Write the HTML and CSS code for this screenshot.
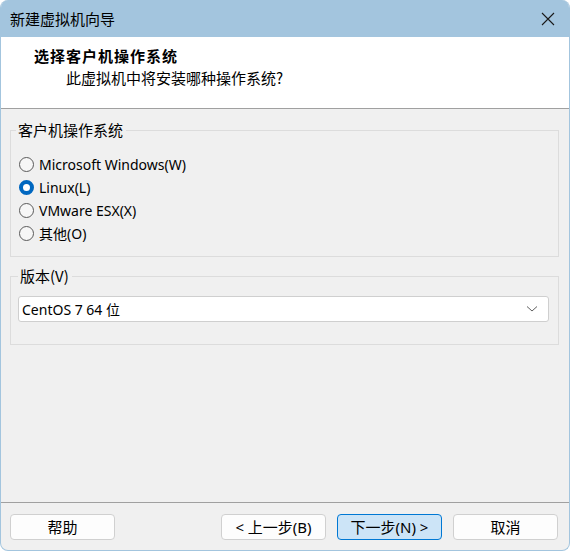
FILE: index.html
```html
<!DOCTYPE html>
<html lang="zh-CN">
<head>
<meta charset="utf-8">
<title>新建虚拟机向导</title>
<link rel="stylesheet" href="styles.css">
</head>
<body>
<div class="window">
  <div class="titlebar">
    <span class="title">新建虚拟机向导</span>
    <span class="close">
      <svg width="14" height="14" viewBox="0 0 14 14"><path d="M1 1 L13 13 M13 1 L1 13" stroke="#1a1a1a" stroke-width="1.1" fill="none"/></svg>
    </span>
  </div>
  <div class="header">
    <div class="h-title">选择客户机操作系统</div>
    <div class="h-sub">此虚拟机中将安装哪种操作系统?</div>
  </div>
  <div class="content">
    <fieldset class="group group-os">
      <legend>客户机操作系统</legend>
      <div class="radio-row"><span class="radio"></span><span class="lbl">Microsoft Windows(W)</span></div>
      <div class="radio-row"><span class="radio checked"></span><span class="lbl">Linux(L)</span></div>
      <div class="radio-row"><span class="radio"></span><span class="lbl">VMware ESX(X)</span></div>
      <div class="radio-row"><span class="radio"></span><span class="lbl">其他(O)</span></div>
    </fieldset>
    <fieldset class="group group-ver">
      <legend>版本(V)</legend>
      <div class="select">
        <span class="lbl">CentOS 7 64 位</span>
        <svg width="12" height="8" viewBox="0 0 12 8"><path d="M1 1.5 L6 6 L11 1.5" stroke="#606060" stroke-width="1" fill="none"/></svg>
      </div>
    </fieldset>
  </div>
  <div class="footer">
    <button class="btn">帮助</button>
    <div class="spacer"></div>
    <button class="btn">&lt; 上一步(B)</button>
    <button class="btn primary">下一步(N) &gt;</button>
    <button class="btn">取消</button>
  </div>
</div>
</body>
</html>
```
FILE: styles.css
```css
html, body {
  margin: 0;
  padding: 0;
  background: #ffffff;
}
body {
  width: 570px;
  height: 551px;
  font-family: "Noto Sans", "Noto Sans CJK SC", sans-serif;
  font-size: 15px;
  color: #000;
}
.window {
  box-sizing: border-box;
  width: 570px;
  height: 551px;
  display: flex;
  flex-direction: column;
  border: 1px solid #a3c5de;
  border-top: none;
  border-radius: 8px;
  overflow: hidden;
  background: #f0f0f0;
}
.titlebar {
  height: 37px;
  flex: none;
  background: #a3c5de;
  display: flex;
  align-items: center;
  justify-content: space-between;
  padding: 0 14px 0 9px;
}
.title {
  font-family: "Noto Sans CJK SC", sans-serif;
  font-size: 15px;
  line-height: 20px;
}
.close {
  display: flex;
}
.header {
  height: 72px;
  flex: none;
  background: #ffffff;
  border-bottom: 1px solid #a0a0a0;
  padding-left: 33px;
  box-sizing: border-box;
}
.h-title {
  margin-top: 9px;
  font-family: "Noto Sans CJK SC", sans-serif;
  font-weight: bold;
  letter-spacing: 1px;
  line-height: 20px;
}
.h-sub {
  margin-top: 2px;
  padding-left: 32px;
  font-family: "Noto Sans CJK SC", sans-serif;
  line-height: 20px;
}
.content {
  flex: 1;
  padding: 0 10px 0 9px;
}
.group {
  margin: 0;
  border: 1px solid #dcdcdc;
  min-width: 0;
}
.group legend {
  padding: 0 3px 0 2px;
  line-height: 20px;
  font-family: "Noto Sans CJK SC", sans-serif;
}
.group-os {
  margin-top: 11px;
  padding: 13px 8px 11px 5px;
}
.group-ver {
  margin-top: 9px;
  padding: 10px 9px 22px 7px;
}
.radio-row {
  display: flex;
  align-items: center;
  gap: 5px;
  height: 23px;
  padding-left: 3px;
  line-height: 23px;
}
.lbl {
  font-size: 14px;
}
.radio {
  box-sizing: border-box;
  width: 15px;
  height: 15px;
  border-radius: 50%;
  border: 1px solid #5a5a5a;
  background: #f7f7f7;
  flex: none;
}
.radio.checked {
  border: 4px solid #0067c0;
  background: #ffffff;
}
.select {
  box-sizing: border-box;
  height: 26px;
  background: #ffffff;
  border: 1px solid #cfcfcf;
  border-radius: 3px;
  display: flex;
  align-items: center;
  justify-content: space-between;
  padding: 0 10px 0 3px;
}
.footer {
  flex: none;
  height: 48px;
  box-sizing: border-box;
  border-top: 1px solid #a0a0a0;
  display: flex;
  align-items: flex-start;
  gap: 11px;
  padding: 11px 11px 0 9px;
}
.spacer {
  flex: 1;
}
.btn {
  width: 105px;
  height: 26px;
  box-sizing: border-box;
  background: #fdfdfd;
  border: 1px solid #d0d0d0;
  border-radius: 4px;
  font-family: "Noto Sans", "Noto Sans CJK SC", sans-serif;
  font-size: 15px;
  color: #000;
  padding: 0;
  line-height: 22px;
}
.btn.primary {
  background: #cce4f7;
  border-color: #0078d4;
}
```
